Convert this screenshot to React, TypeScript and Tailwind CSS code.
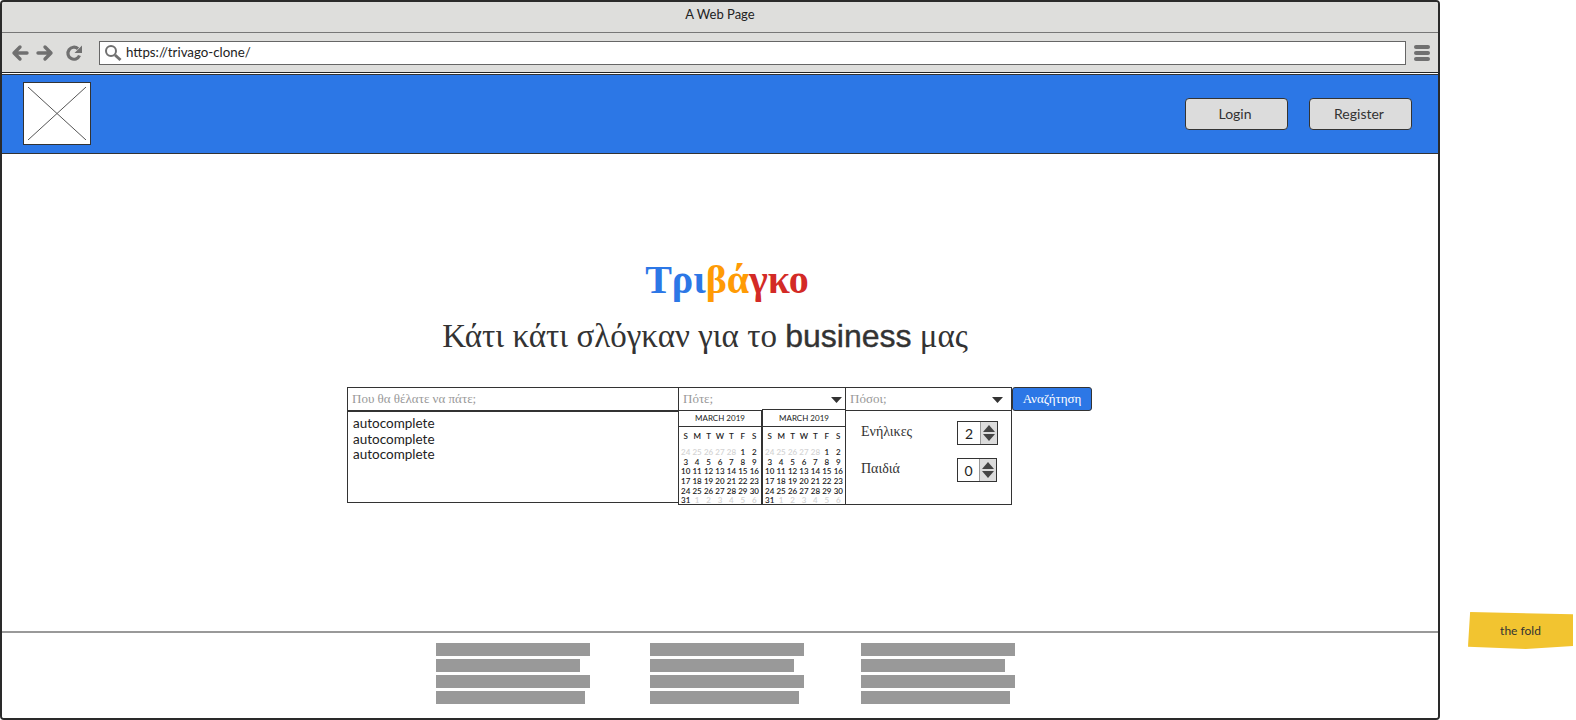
import React from "react";

const sans = "font-['Lato','Noto_Sans',sans-serif]";
const serif = "font-['Liberation_Serif','Times_New_Roman',serif]";

const row1 = ["24","25","26","27","28","1","2"];
const rows = [
  ["3","4","5","6","7","8","9"],
  ["10","11","12","13","14","15","16"],
  ["17","18","19","20","21","22","23"],
  ["24","25","26","27","28","29","30"],
];
const rowLast = ["31","1","2","3","4","5","6"];

function DayRow({ cells, dimFrom, dimTo }: { cells: string[]; dimFrom: number; dimTo: number }) {
  return (
    <div className="grid grid-cols-7 h-[9.7px] leading-[10px]">
      {cells.map((c, i) => (
        <span key={i} className={i >= dimFrom && i < dimTo ? "text-center text-[#d4d4d4]" : "text-center text-[#222]"}>
          {c}
        </span>
      ))}
    </div>
  );
}

function Calendar({ raised }: { raised?: boolean }) {
  return (
    <div className={`w-[84px] border border-[#333] bg-white overflow-hidden ${sans} ${raised ? "h-[96px] -mt-[1px]" : "h-[95px]"}`}>
      <div className={`border-b border-[#333] text-[8px] text-center text-[#222] ${raised ? "h-[17px] leading-[17px]" : "h-[16px] leading-[15px]"}`}>MARCH 2019</div>
      <div className="px-[1px] text-[8px] font-semibold">
        <div className="grid grid-cols-7 h-[19px] pt-[1px] leading-[16px] text-[8px] text-[#222] text-center">
          {["S","M","T","W","T","F","S"].map((d, i) => <span key={i}>{d}</span>)}
        </div>
        <div className="h-[1px]" />
        <DayRow cells={row1} dimFrom={0} dimTo={5} />
        {rows.map((r, i) => <DayRow key={i} cells={r} dimFrom={0} dimTo={0} />)}
        <DayRow cells={rowLast} dimFrom={1} dimTo={7} />
      </div>
    </div>
  );
}

function Caret() {
  return (
    <svg width="11" height="6" viewBox="0 0 11 6" className="shrink-0 mt-[2px]">
      <path d="M0 0H11L5.5 6Z" fill="#333" />
    </svg>
  );
}

function Stepper({ value, w }: { value: string; w: string }) {
  return (
    <div className={`flex h-[24px] border border-[#333] bg-white ${w}`}>
      <div className={`flex-1 flex items-center justify-center text-[14px] text-[#222] ${sans}`}>{value}</div>
      <div className="w-[17px] bg-[#dcdcdc] border-l border-[#999] flex flex-col items-center justify-center gap-[2px]">
        <svg width="12" height="7" viewBox="0 0 12 7"><path d="M0 7H12L6 0Z" fill="#444" /></svg>
        <svg width="12" height="7" viewBox="0 0 12 7"><path d="M0 0H12L6 7Z" fill="#444" /></svg>
      </div>
    </div>
  );
}

function BarColumn({ gapClass }: { gapClass: string }) {
  return (
    <div className={`w-[154px] flex flex-col gap-[3px] ${gapClass}`}>
      <div className="h-[13px] w-[154px] bg-[#999]" />
      <div className="h-[13px] w-[144px] bg-[#999]" />
      <div className="h-[13px] w-[154px] bg-[#999]" />
      <div className="h-[13px] w-[149px] bg-[#999]" />
    </div>
  );
}

export default function App() {
  return (
    <div className="flex w-[1576px] h-[720px] bg-white overflow-hidden">
      <div className="w-[1440px] h-[720px] shrink-0 flex flex-col border-2 border-[#2a2a2a] rounded-[4px] overflow-hidden">
        <div className={`h-[31px] shrink-0 bg-[#dededc] border-b border-[#777] flex items-center justify-center pb-[4px] text-[13px] text-[#222] ${sans}`}>
          A Web Page
        </div>
        <div className="h-[39px] shrink-0 bg-[#dededc] flex items-center pl-[9px] pr-[1px]">
          <svg width="18" height="18" viewBox="0 0 18 18" fill="none" stroke="#707070" strokeWidth="3.4" strokeLinejoin="round" strokeLinecap="round" className="shrink-0">
            <path d="M16 9H3M9 3L3 9L9 15" />
          </svg>
          <svg width="18" height="18" viewBox="0 0 18 18" fill="none" stroke="#707070" strokeWidth="3.4" strokeLinejoin="round" strokeLinecap="round" className="shrink-0 ml-[7px]">
            <path d="M2 9H15M9 3L15 9L9 15" />
          </svg>
          <svg width="18" height="18" viewBox="0 0 18 18" fill="none" className="shrink-0 ml-[11px]">
            <path d="M14.5 11.5A6 6 0 1 1 13 4.8" stroke="#707070" strokeWidth="3.2" />
            <path d="M17 1.5V9H9.5Z" fill="#707070" />
          </svg>
          <div className="w-[1307px] h-[24px] ml-[16px] mt-[1px] bg-white border border-[#666] flex items-center pl-[4px]">
            <svg width="18" height="18" viewBox="0 0 18 18" fill="none" stroke="#707070" className="shrink-0">
              <circle cx="7" cy="7" r="5" strokeWidth="2" />
              <path d="M11 11L16.5 16" strokeWidth="3" />
            </svg>
            <span className={`ml-[4px] text-[13.3px] text-[#222] ${sans}`}>https://trivago-clone/</span>
          </div>
          <div className="ml-[8px] w-[16px] flex flex-col gap-[2px]">
            <div className="h-[4px] rounded-[2px] bg-[#707070]" />
            <div className="h-[4px] rounded-[2px] bg-[#707070]" />
            <div className="h-[4px] rounded-[2px] bg-[#707070]" />
          </div>
        </div>
        <div className="h-[2px] shrink-0 bg-white border-t border-[#222]" />
        <header className="h-[80px] shrink-0 bg-[#2c77e6] border-t border-b border-[#333] flex items-center justify-between pl-[21px] pr-[26px]">
          <div className="w-[68px] h-[63px] -mt-[2px] bg-white border border-[#333] p-[4px]">
            <svg viewBox="0 0 58 53" preserveAspectRatio="none" className="w-full h-full" stroke="#555" strokeWidth="1">
              <path d="M0 0L58 53M58 0L0 53" />
            </svg>
          </div>
          <div className="flex gap-[21px]">
            <button className={`w-[103px] h-[32px] pb-[2px] pr-[3px] bg-[#dcdcdc] border border-[#333] rounded-[4px] text-[14px] text-[#333] ${sans}`}>Login</button>
            <button className={`w-[103px] h-[32px] pb-[2px] pr-[3px] bg-[#dcdcdc] border border-[#333] rounded-[4px] text-[14px] text-[#333] ${sans}`}>Register</button>
          </div>
        </header>
        <main className="flex-1 flex flex-col items-center bg-white min-h-0">
          <h1 className={`mt-[101px] h-[50px] leading-[50px] text-[40px] font-bold ${serif} ml-[14px]`}>
            <span className="text-[#2c77e6]">Τρι</span>
            <span className="text-[#ff9b05]">βά</span>
            <span className="text-[#d32a26]">γκο</span>
          </h1>
          <p className={`mt-[9px] h-[44px] leading-[44px] text-[33px] text-[#333] ${serif} -ml-[30px]`}>
            Κάτι κάτι σλόγκαν για το <span className="font-['Liberation_Sans',sans-serif] font-medium [-webkit-text-stroke:0.4px_#333] text-[32px]">business</span> μας
          </p>
          <div className="mt-[29px] w-[1436px] pl-[345px] flex items-start">
            <div className="w-[332px] shrink-0 flex flex-col">
              <div className={`h-[25px] border border-[#333] border-b-2 flex items-center pl-[4px] text-[13px] text-[#999] ${serif}`}>Που θα θέλατε να πάτε;</div>
              <div className={`h-[91px] border border-t-0 border-[#333] pl-[5px] pt-[4px] text-[13.5px] leading-[15.5px] text-[#222] ${sans}`}>
                <div>autocomplete</div>
                <div>autocomplete</div>
                <div>autocomplete</div>
              </div>
            </div>
            <div className="w-[168px] -ml-[1px] shrink-0 flex flex-col">
              <div className={`h-[24px] border border-[#333] flex items-center justify-between pl-[4px] pr-[3px] text-[13px] text-[#999] ${serif}`}>
                <span>Πότε;</span>
                <Caret />
              </div>
              <div className="flex items-start -mt-[1px]">
                <Calendar />
                <Calendar raised />
              </div>
            </div>
            <div className="w-[167px] -ml-[1px] shrink-0 flex flex-col">
              <div className={`h-[24px] border border-[#333] flex items-center justify-between pl-[4px] pr-[8px] text-[13px] text-[#999] ${serif}`}>
                <span>Πόσοι;</span>
                <Caret />
              </div>
              <div className={`h-[95px] -mt-[1px] border border-[#333] pl-[15px] pr-[13px] pt-[10px] text-[14px] text-[#333] ${serif}`}>
                <div className="flex items-center justify-between h-[24px]">
                  <span className="-mt-[3px]">Ενήλικες</span>
                  <Stepper value="2" w="w-[41px]" />
                </div>
                <div className="flex items-center justify-between h-[24px] mt-[13px] pr-[1px]">
                  <span className="-mt-[3px]">Παιδιά</span>
                  <Stepper value="0" w="w-[40px]" />
                </div>
              </div>
            </div>
            <button className={`w-[80px] h-[24px] shrink-0 bg-[#2c77e6] border border-[#333] rounded-[3px] text-[13px] text-white ${serif}`}>Αναζήτηση</button>
          </div>
          <div className="flex-1" />
          <div className="w-full h-[87px] shrink-0 border-t-2 border-[#999] flex pl-[434px] pt-[10px]">
            <BarColumn gapClass="" />
            <BarColumn gapClass="ml-[60px]" />
            <BarColumn gapClass="ml-[57px]" />
          </div>
        </main>
      </div>
      <div className={`self-start mt-[612px] ml-[28px] w-[105px] h-[37px] shrink-0 bg-[#f2c430] [clip-path:polygon(2%_0,100%_6%,100%_92%,55%_100%,0_94%)] flex items-center justify-center text-[12px] text-[#333] ${sans}`}>
        the fold
      </div>
    </div>
  );
}
